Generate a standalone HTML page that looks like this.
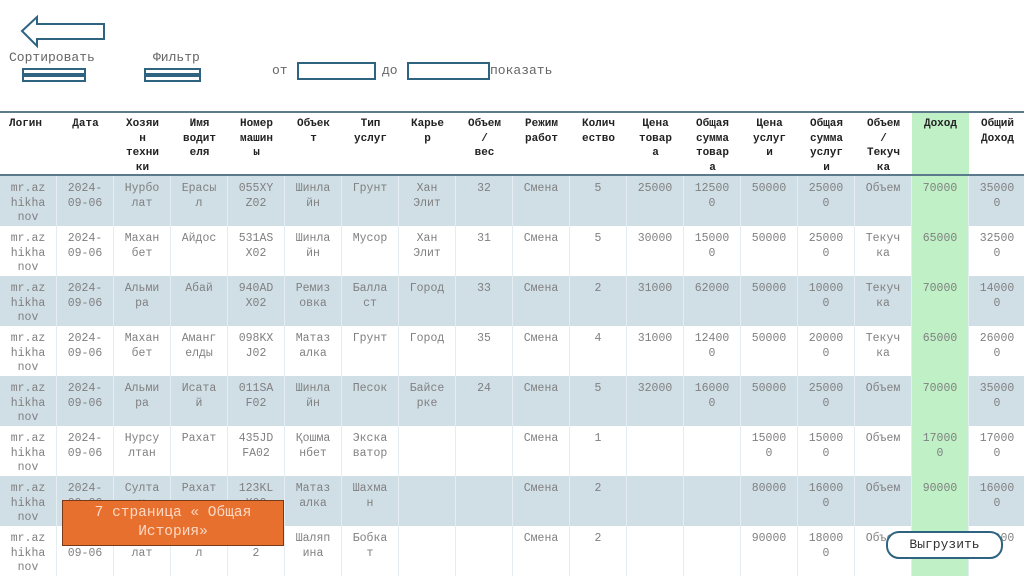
<!DOCTYPE html><html><head><meta charset="utf-8"><style>
body{margin:0;width:1024px;height:574px;background:#fff;position:relative;overflow:hidden;font-family:"Liberation Mono","DejaVu Sans Mono",monospace}
.t{position:absolute;color:#666;font-size:13px}
.tb{position:absolute;left:0;top:111px;width:1026px}
.r{display:flex;height:50px}
.c{width:57px;flex:none;box-sizing:border-box;padding:6px 9px 0;text-align:center;overflow-wrap:anywhere;font-size:11.5px;line-height:14.5px;color:#808080;border-right:1px solid #e4edf2}
.h{height:65px;border-top:2px solid #5b7a8e;border-bottom:2px solid #5b7a8e;box-sizing:border-box}
.h .c{font-weight:bold;color:#222;font-size:11px;padding-top:4px;border-right:none}
.s .c{background:#d0dee6}
.c.g{background:#bff0c6!important}
.box{position:absolute;border:2px solid #2e6480;background:#fff}
</style></head><body>
<svg style="position:absolute;left:20px;top:15px" width="88" height="34"><path d="M2 16 L17 2 L17 9 L84 9 L84 24 L17 24 L17 31 Z" fill="#fff" stroke="#2e6480" stroke-width="2"/></svg>
<div class="t" style="left:9px;top:50px">Сортировать</div>
<div class="t" style="left:153px;top:50px">Фильтр</div>
<div class="box" style="left:22px;top:68px;width:60px;height:3px"></div>
<div class="box" style="left:22px;top:75px;width:60px;height:3px"></div>
<div class="box" style="left:144px;top:68px;width:53px;height:3px"></div>
<div class="box" style="left:144px;top:75px;width:53px;height:3px"></div>
<div class="t" style="left:272px;top:63px">от</div>
<div class="box" style="left:297px;top:62px;width:75px;height:14px"></div>
<div class="t" style="left:382px;top:63px">до</div>
<div class="box" style="left:407px;top:62px;width:79px;height:14px"></div>
<div class="t" style="left:490px;top:63px">показать</div>
<div class="tb">
<div class="r h"><div class="c" style="text-align:left">Логин</div><div class="c">Дата</div><div class="c">Хозяин техники</div><div class="c">Имя водителя</div><div class="c">Номер машины</div><div class="c">Объект</div><div class="c">Тип услуг</div><div class="c">Карьер</div><div class="c">Объем<br>/<br>вес</div><div class="c">Режим работ</div><div class="c">Количество</div><div class="c">Цена товара</div><div class="c">Общая сумма товара</div><div class="c">Цена услуги</div><div class="c">Общая сумма услуги</div><div class="c">Объем<br>/<br>Текучка</div><div class="c g">Доход</div><div class="c">Общий Доход</div></div>
<div class="r s"><div class="c">mr.azhikhanov</div><div class="c">2024-09-06</div><div class="c">Нурболат</div><div class="c">Ерасыл</div><div class="c">055XYZ02</div><div class="c">Шинлайн</div><div class="c">Грунт</div><div class="c">Хан Элит</div><div class="c">32</div><div class="c">Смена</div><div class="c">5</div><div class="c">25000</div><div class="c">125000</div><div class="c">50000</div><div class="c">250000</div><div class="c">Объем</div><div class="c g">70000</div><div class="c">350000</div></div>
<div class="r"><div class="c">mr.azhikhanov</div><div class="c">2024-09-06</div><div class="c">Махан бет</div><div class="c">Айдос</div><div class="c">531ASX02</div><div class="c">Шинлайн</div><div class="c">Мусор</div><div class="c">Хан Элит</div><div class="c">31</div><div class="c">Смена</div><div class="c">5</div><div class="c">30000</div><div class="c">150000</div><div class="c">50000</div><div class="c">250000</div><div class="c">Текучка</div><div class="c g">65000</div><div class="c">325000</div></div>
<div class="r s"><div class="c">mr.azhikhanov</div><div class="c">2024-09-06</div><div class="c">Альмира</div><div class="c">Абай</div><div class="c">940ADX02</div><div class="c">Ремизовка</div><div class="c">Балласт</div><div class="c">Город</div><div class="c">33</div><div class="c">Смена</div><div class="c">2</div><div class="c">31000</div><div class="c">62000</div><div class="c">50000</div><div class="c">100000</div><div class="c">Текучка</div><div class="c g">70000</div><div class="c">140000</div></div>
<div class="r"><div class="c">mr.azhikhanov</div><div class="c">2024-09-06</div><div class="c">Махан бет</div><div class="c">Амангелды</div><div class="c">098KXJ02</div><div class="c">Матазалка</div><div class="c">Грунт</div><div class="c">Город</div><div class="c">35</div><div class="c">Смена</div><div class="c">4</div><div class="c">31000</div><div class="c">124000</div><div class="c">50000</div><div class="c">200000</div><div class="c">Текучка</div><div class="c g">65000</div><div class="c">260000</div></div>
<div class="r s"><div class="c">mr.azhikhanov</div><div class="c">2024-09-06</div><div class="c">Альмира</div><div class="c">Исатай</div><div class="c">011SAF02</div><div class="c">Шинлайн</div><div class="c">Песок</div><div class="c">Байсерке</div><div class="c">24</div><div class="c">Смена</div><div class="c">5</div><div class="c">32000</div><div class="c">160000</div><div class="c">50000</div><div class="c">250000</div><div class="c">Объем</div><div class="c g">70000</div><div class="c">350000</div></div>
<div class="r"><div class="c">mr.azhikhanov</div><div class="c">2024-09-06</div><div class="c">Нурсултан</div><div class="c">Рахат</div><div class="c">435JDFA02</div><div class="c">Қошманбет</div><div class="c">Экскаватор</div><div class="c"></div><div class="c"></div><div class="c">Смена</div><div class="c">1</div><div class="c"></div><div class="c"></div><div class="c">150000</div><div class="c">150000</div><div class="c">Объем</div><div class="c g">170000</div><div class="c">170000</div></div>
<div class="r s"><div class="c">mr.azhikhanov</div><div class="c">2024-09-06</div><div class="c">Султан</div><div class="c">Рахат</div><div class="c">123KLX02</div><div class="c">Матазалка</div><div class="c">Шахман</div><div class="c"></div><div class="c"></div><div class="c">Смена</div><div class="c">2</div><div class="c"></div><div class="c"></div><div class="c">80000</div><div class="c">160000</div><div class="c">Объем</div><div class="c g">90000</div><div class="c">160000</div></div>
<div class="r"><div class="c">mr.azhikhanov</div><div class="c">2024-09-06</div><div class="c">Нурболат</div><div class="c">Ерасыл</div><div class="c">555SO2</div><div class="c">Шаляпина</div><div class="c">Бобкат</div><div class="c"></div><div class="c"></div><div class="c">Смена</div><div class="c">2</div><div class="c"></div><div class="c"></div><div class="c">90000</div><div class="c">180000</div><div class="c">Объем</div><div class="c g">90000</div><div class="c">180000</div></div>
</div>
<div style="position:absolute;left:62px;top:500px;width:222px;height:46px;box-sizing:border-box;background:#e8702f;border:1px solid #7a3a18;color:#fbd9c4;font-size:14.5px;text-align:center;line-height:19px;padding:3px 24px 0">7 страница « Общая История»</div>
<div style="position:absolute;left:886px;top:531px;width:113px;height:24px;border:2px solid #2e6480;border-radius:13px;background:#fff;color:#333;font-size:13px;text-align:center;line-height:24px">Выгрузить</div>
</body></html>
